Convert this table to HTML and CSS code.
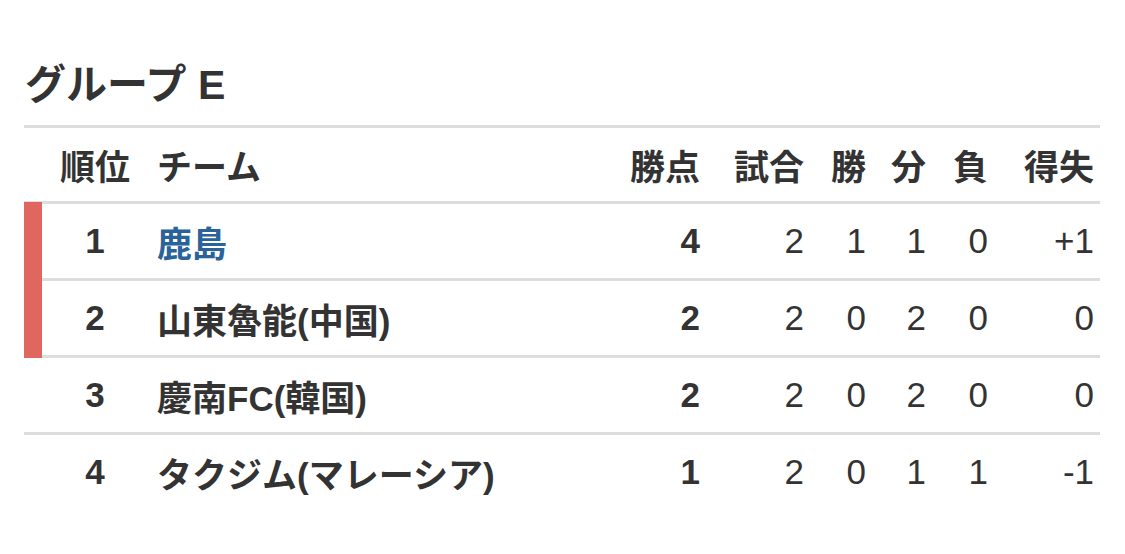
FILE: index.html
```html
<!DOCTYPE html>
<html lang="ja">
<head>
<meta charset="utf-8">
<title>グループ E</title>
<link rel="stylesheet" href="styles.css">
</head>
<body>
<div class="page">
  <h2 class="group-title">グループ E</h2>
  <div class="standings">
    <div class="row head">
      <div class="c rank">順位</div>
      <div class="c team">チーム</div>
      <div class="c num">勝点</div>
      <div class="c num">試合</div>
      <div class="c num">勝</div>
      <div class="c num">分</div>
      <div class="c num">負</div>
      <div class="c num">得失</div>
    </div>
    <div class="row promo">
      <div class="c rank">1</div>
      <div class="c team"><a class="team-link" href="#">鹿島</a></div>
      <div class="c num pts">4</div>
      <div class="c num">2</div>
      <div class="c num">1</div>
      <div class="c num">1</div>
      <div class="c num">0</div>
      <div class="c num">+1</div>
    </div>
    <div class="row promo">
      <div class="c rank">2</div>
      <div class="c team">山東魯能(中国)</div>
      <div class="c num pts">2</div>
      <div class="c num">2</div>
      <div class="c num">0</div>
      <div class="c num">2</div>
      <div class="c num">0</div>
      <div class="c num">0</div>
    </div>
    <div class="row">
      <div class="c rank">3</div>
      <div class="c team">慶南FC(韓国)</div>
      <div class="c num pts">2</div>
      <div class="c num">2</div>
      <div class="c num">0</div>
      <div class="c num">2</div>
      <div class="c num">0</div>
      <div class="c num">0</div>
    </div>
    <div class="row last">
      <div class="c rank">4</div>
      <div class="c team">タクジム(マレーシア)</div>
      <div class="c num pts">1</div>
      <div class="c num">2</div>
      <div class="c num">0</div>
      <div class="c num">1</div>
      <div class="c num">1</div>
      <div class="c num">-1</div>
    </div>
  </div>
</div>
</body>
</html>
```

FILE: styles.css
```css
html, body {
  margin: 0;
  padding: 0;
  background: #ffffff;
}

body {
  font-family: "Liberation Sans", "Noto Sans CJK JP", sans-serif;
  color: #333333;
}

.page {
  padding: 61px 25px 0 24px;
}

.group-title {
  margin: 0;
  font-size: 41px;
  line-height: 48px;
  font-weight: 700;
  padding-left: 1px;
  height: 64px;
}

.standings {
  border-top: 3px solid #dddddd;
}

.row {
  position: relative;
  display: grid;
  grid-template-columns: 106px 1fr 80px 104px 62px 60px 62px 106px;
  align-items: center;
  height: 74px;
  padding-left: 18px;
  padding-right: 6px;
  border-bottom: 3px solid #dddddd;
  font-size: 35px;
}

.row.head {
  height: 73px;
  font-weight: 700;
}

.row.promo::before {
  content: "";
  position: absolute;
  left: 0;
  top: -2px;
  bottom: -3px;
  width: 18px;
  background: #e0675f;
}

.row.last {
  border-bottom: none;
}

.c {
  white-space: nowrap;
}

.rank {
  text-align: center;
  font-weight: 700;
}

.team {
  padding-left: 9px;
  font-weight: 700;
}

.num {
  text-align: right;
}

.pts {
  font-weight: 700;
}

.team-link {
  color: #2a6399;
  text-decoration: none;
}
```
